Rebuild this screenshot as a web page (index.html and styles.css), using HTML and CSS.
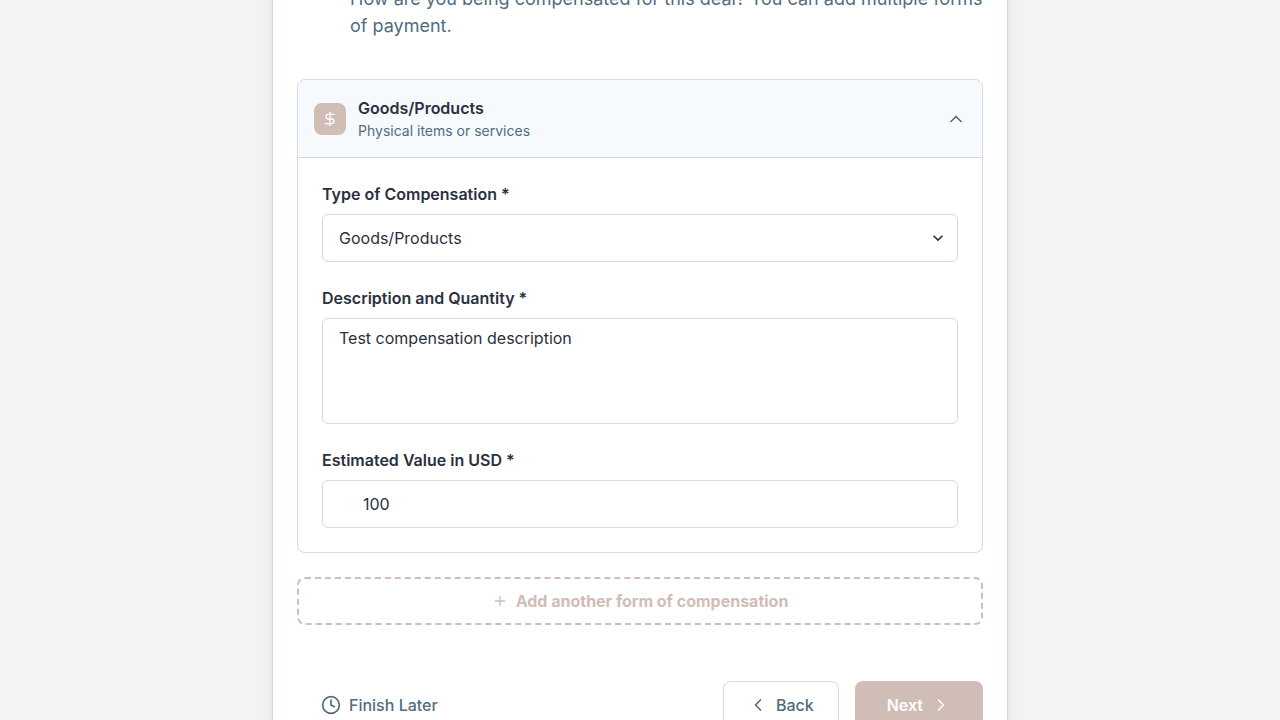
FILE: index.html
```html
<!DOCTYPE html>
<html lang="en">
<head>
<meta charset="utf-8">
<meta name="viewport" content="width=device-width, initial-scale=1">
<title>Compensation</title>
<link rel="stylesheet" href="styles.css">
</head>
<body>
<main class="page">
  <form class="card">
    <p class="intro">How are you being compensated for this deal? You can add multiple forms of payment.</p>

    <section class="panel">
      <button type="button" class="panel-header" aria-expanded="true">
        <span class="badge">
          <svg class="icon-sm" viewBox="0 0 24 24" aria-hidden="true"><path d="M12 2v20"/><path d="M18 5H9.500a3.500 3.500 0 0 0 0 7h5a3.500 3.500 0 0 1 0 7H5"/></svg>
        </span>
        <span class="panel-heading">
          <span class="panel-title">Goods/Products</span>
          <span class="panel-subtitle">Physical items or services</span>
        </span>
        <svg class="icon" viewBox="0 0 24 24" aria-hidden="true"><path d="M18 15l-6-6-6 6"/></svg>
      </button>

      <div class="panel-body">
        <div class="field">
          <label for="type">Type of Compensation *</label>
          <div class="select-wrap">
            <select id="type" class="control">
              <option>Goods/Products</option>
            </select>
            <svg class="select-arrow" viewBox="0 0 24 24" aria-hidden="true"><path d="M16.590 8.590L12 13.170 7.410 8.590 6 10l6 6 6-6z"/></svg>
          </div>
        </div>
        <div class="field">
          <label for="description">Description and Quantity *</label>
          <textarea id="description" class="control control-area" rows="4">Test compensation description</textarea>
        </div>
        <div class="field">
          <label for="value">Estimated Value in USD *</label>
          <input id="value" class="control control-amount" type="text" inputmode="decimal" value="100">
        </div>
      </div>
    </section>

    <button type="button" class="add-button">
      <svg class="icon-sm" viewBox="0 0 24 24" aria-hidden="true"><path d="M12 5v14M5 12h14"/></svg>
      Add another form of compensation
    </button>

    <footer class="actions">
      <button type="button" class="button button-ghost">
        <svg class="icon" viewBox="0 0 24 24" aria-hidden="true"><circle cx="12" cy="12" r="10"/><path d="M12 6v6l4 2"/></svg>
        Finish Later
      </button>
      <div class="actions-main">
        <button type="button" class="button button-outline">
          <svg class="icon" viewBox="0 0 24 24" aria-hidden="true"><path d="M15 18l-6-6 6-6"/></svg>
          Back
        </button>
        <button type="submit" class="button button-solid">
          Next
          <svg class="icon" viewBox="0 0 24 24" aria-hidden="true"><path d="M9 18l6-6-6-6"/></svg>
        </button>
      </div>
    </footer>
  </form>
</main>
</body>
</html>
```

FILE: styles.css
```css
:root {
  --ink: #2b3040;
  --muted: #4f6d7f;
  --line: #d4dae4;
  --accent: #d0bdb6;
}

* {
  box-sizing: border-box;
}

body {
  margin: 0;
  height: 100vh;
  overflow: hidden;
  background: #f3f3f3;
  color: var(--ink);
  font-family: Inter, "Liberation Sans", sans-serif;
  font-size: 16px;
  line-height: 24px;
}

button,
input,
select,
textarea {
  margin: 0;
  font: inherit;
  color: inherit;
}

button {
  cursor: pointer;
}

.page {
  max-width: 768px;
  margin: -40px auto 0;
  padding: 0 16px;
}

.card {
  padding: 24px;
  background: #fff;
  border: 1px solid var(--line);
  box-shadow: 0 10px 15px -3px rgba(0, 0, 0, 0.1), 0 4px 6px -2px rgba(0, 0, 0, 0.05);
}

.intro {
  margin: 0 0 40px;
  padding-left: 53px;
  color: var(--muted);
  font-size: 18px;
  line-height: 27px;
}

.panel {
  overflow: hidden;
  border: 1px solid var(--line);
  border-radius: 8px;
}

.panel-header {
  display: flex;
  align-items: center;
  gap: 12px;
  width: 100%;
  padding: 16px;
  border: 0;
  border-bottom: 1px solid var(--line);
  background: #f6fafd;
  text-align: left;
}

.badge {
  display: grid;
  place-items: center;
  width: 32px;
  height: 32px;
  border-radius: 8px;
  background: var(--accent);
  color: #fff;
}

.panel-heading {
  display: flex;
  flex: 1;
  flex-direction: column;
}

.panel-title {
  font-weight: 600;
}

.panel-subtitle {
  color: var(--muted);
  font-size: 14px;
  line-height: 21px;
}

.panel-header > .icon {
  color: var(--muted);
}

.icon,
.icon-sm {
  flex: none;
  width: 20px;
  height: 20px;
  fill: none;
  stroke: currentColor;
  stroke-width: 2;
  stroke-linecap: round;
  stroke-linejoin: round;
}

.icon-sm {
  width: 16px;
  height: 16px;
}

.panel-body {
  display: flex;
  flex-direction: column;
  gap: 24px;
  padding: 24px;
}

.field {
  display: flex;
  flex-direction: column;
  gap: 8px;
}

.field label {
  font-weight: 600;
}

.control {
  display: block;
  width: 100%;
  height: 48px;
  padding: 0 16px;
  border: 1px solid var(--line);
  border-radius: 6px;
  background: #fff;
  appearance: none;
}

.control-area {
  height: auto;
  padding: 8px 16px;
  line-height: 22px;
  resize: none;
}

.control-amount {
  padding-left: 40px;
}

.select-wrap {
  position: relative;
}

.select-arrow {
  position: absolute;
  top: 14px;
  right: 10px;
  width: 20px;
  height: 20px;
  fill: currentColor;
  pointer-events: none;
}

.add-button {
  display: flex;
  align-items: center;
  justify-content: center;
  gap: 8px;
  width: 100%;
  height: 48px;
  margin-top: 24px;
  border: 2px dashed var(--accent);
  border-radius: 8px;
  background: none;
  color: var(--accent);
  font-weight: 700;
}

.actions {
  display: flex;
  justify-content: space-between;
  margin-top: 56px;
}

.actions-main {
  display: flex;
  gap: 16px;
}

.button {
  display: flex;
  align-items: center;
  gap: 8px;
  height: 48px;
  padding: 0 24px;
  border: 0;
  border-radius: 8px;
  background: none;
  color: var(--muted);
  font-weight: 500;
}

.button-outline {
  border: 1px solid var(--line);
}

.button-solid {
  padding: 0 32px;
  background: var(--accent);
  color: #fff;
  font-weight: 600;
}
```
